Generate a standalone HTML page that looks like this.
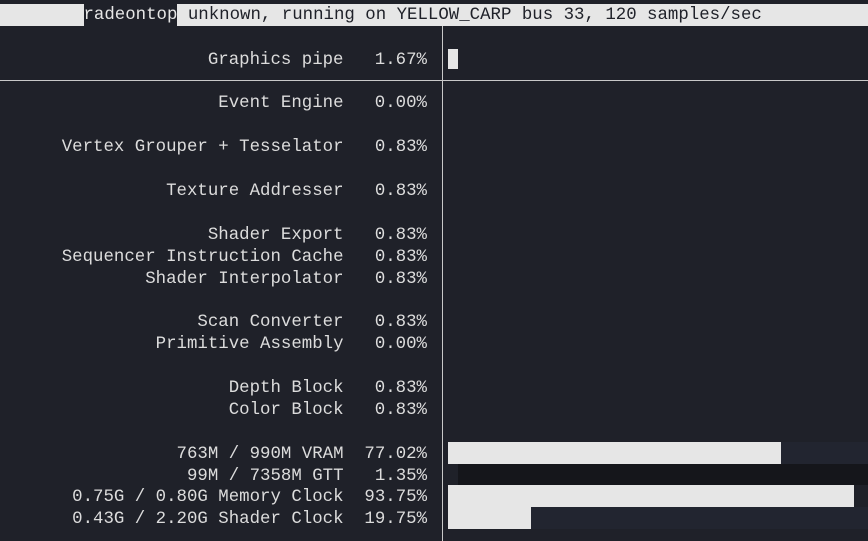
<!DOCTYPE html>
<html><head><style>
html,body{margin:0;padding:0;width:868px;height:541px;background:#1f2129;overflow:hidden;}
body{position:relative;font-family:"Liberation Mono",monospace;font-size:17.4px;color:#dcdcdc;}
.r{position:absolute;right:441px;white-space:pre;line-height:22px;height:22px;margin-top:2px;}
.title{position:absolute;left:0;top:4px;width:868px;height:22px;background:#e6e6e6;color:#1f2129;white-space:pre;line-height:24px;}
.title span{background:#1f2129;color:#e6e6e6;display:inline-block;height:22px;}
.vl{position:absolute;left:442px;top:26px;width:1px;height:515px;background:#c8c8c8;}
.hl{position:absolute;left:0;top:80px;width:868px;height:1px;background:#c8c8c8;}
.bar{position:absolute;height:22px;}
</style></head><body>
<div class="title">        <span>radeontop</span> unknown, running on YELLOW_CARP bus 33, 120 samples/sec</div>
<div class="vl"></div><div class="hl"></div>
<div class="r" style="top:48px">Graphics pipe   1.67%</div>
<div class="bar" style="left:448px;top:49px;width:10px;height:20px;background:#e6e6e6"></div>
<div class="r" style="top:91px">Event Engine   0.00%</div>
<div class="r" style="top:135px">Vertex Grouper + Tesselator   0.83%</div>
<div class="r" style="top:179px">Texture Addresser   0.83%</div>
<div class="r" style="top:223px">Shader Export   0.83%</div>
<div class="r" style="top:245px">Sequencer Instruction Cache   0.83%</div>
<div class="r" style="top:267px">Shader Interpolator   0.83%</div>
<div class="r" style="top:310px">Scan Converter   0.83%</div>
<div class="r" style="top:332px">Primitive Assembly   0.00%</div>
<div class="r" style="top:376px">Depth Block   0.83%</div>
<div class="r" style="top:398px">Color Block   0.83%</div>
<div class="r" style="top:442px">763M / 990M VRAM  77.02%</div>
<div class="r" style="top:464px">99M / 7358M GTT   1.35%</div>
<div class="r" style="top:485px">0.75G / 0.80G Memory Clock  93.75%</div>
<div class="r" style="top:507px">0.43G / 2.20G Shader Clock  19.75%</div>
<div class="bar" style="left:448px;top:442px;width:333px;background:#e6e6e6"></div>
<div class="bar" style="left:781px;top:442px;width:87px;background:#222530"></div>
<div class="bar" style="left:458px;top:464px;width:410px;height:21px;background:#15161b"></div>
<div class="bar" style="left:448px;top:485px;width:406px;background:#e6e6e6"></div>
<div class="bar" style="left:448px;top:507px;width:83px;background:#e6e6e6"></div>
<div class="bar" style="left:531px;top:507px;width:337px;background:#222530"></div>
</body></html>
